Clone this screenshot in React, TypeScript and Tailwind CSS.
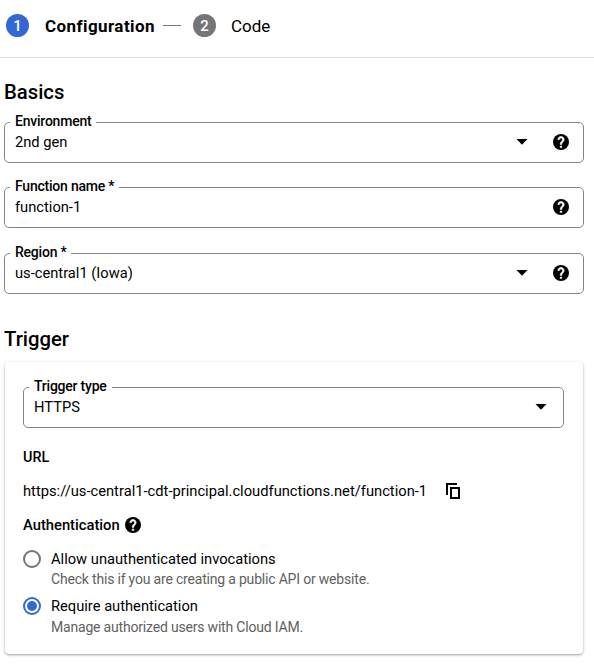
import type { ReactNode } from "react";

function HelpIcon({ className = "" }: { className?: string }) {
  return (
    <svg viewBox="2 2 20 20" className={`h-4 w-4 shrink-0 ${className}`}>
      <circle cx="12" cy="12" r="10" fill="#000" />
      <path
        fill="#fff"
        stroke="#fff"
        strokeWidth="0.7"
        d="M13 19h-2v-2h2v2zm2.07-7.75l-.9.92C13.45 12.9 13 13.5 13 15h-2v-.5c0-1.1.45-2.1 1.17-2.83l1.24-1.26c.37-.36.59-.86.59-1.41 0-1.1-.9-2-2-2s-2 .9-2 2H8c0-2.21 1.79-4 4-4s4 1.79 4 4c0 .88-.36 1.68-.93 2.25z"
      />
    </svg>
  );
}

function Arrow({ className = "" }: { className?: string }) {
  return (
    <svg viewBox="0 0 12 6" className={`h-1.5 w-3 shrink-0 ${className}`} fill="#000">
      <path d="M0.5 0h11L6 5.8z" />
    </svg>
  );
}

function Field({ label, value, arrow, help }: { label: string; value: string; arrow?: boolean; help?: boolean }) {
  return (
    <div className="relative flex h-[41px] items-center rounded-[5px] border border-[#80868b] pr-3.5 pb-px pl-2.5">
      <span className="absolute -top-[10px] left-[5px] bg-white px-[5px] text-[14px] leading-4 font-medium tracking-[-0.22px] whitespace-nowrap">
        {label}
      </span>
      <span className="mb-px flex-1 text-[14.7px] leading-5">{value}</span>
      {arrow && <Arrow className={help ? "" : "mr-0.5"} />}
      {help && <HelpIcon className="mb-px ml-[25px]" />}
    </div>
  );
}

function Step({ n, color, children }: { n: number; color: string; children: ReactNode }) {
  return (
    <div className="flex items-center">
      <span className={`flex h-[23px] w-[23px] items-center justify-center rounded-full pt-0.5 text-[15px] font-medium text-white ${color}`}>
        {n}
      </span>
      {children}
    </div>
  );
}

function Option({ checked, title, hint, gap }: { checked?: boolean; title: string; hint: string; gap: string }) {
  return (
    <div className="flex">
      <span
        className={`flex h-[18px] w-[18px] shrink-0 items-center justify-center rounded-full border-2 ${checked ? "border-[#3367d6]" : "border-[#757575]"}`}
      >
        {checked && <span className="h-2.5 w-2.5 rounded-full bg-[#3367d6]" />}
      </span>
      <div className="ml-2.5">
        <div className="text-[14.7px] leading-[18px]">{title}</div>
        <div className={`text-[14px] leading-[18px] tracking-[-0.19px] text-[#616161] ${gap}`}>{hint}</div>
      </div>
    </div>
  );
}

export default function App() {
  return (
    <div className="h-[672px] w-[594px] overflow-hidden bg-white font-['Roboto',sans-serif] text-black">
      <header className="flex h-[58px] items-center border-b border-[#dadce0] pb-[6px] pl-[6px]">
        <Step n={1} color="bg-[#3367d6]">
          <span className="ml-4 w-[110px] pt-0.5 text-[17px] font-bold tracking-[0.42px] whitespace-nowrap">Configuration</span>
        </Step>
        <div className="mr-3 ml-2 h-px w-[18px] bg-[#757575]" />
        <Step n={2} color="bg-[#757575]">
          <span className="ml-[15px] pt-0.5 text-[17px]">Code</span>
        </Step>
      </header>

      <main className="pr-2.5 pl-1">
        <h2 className="mt-[22px] text-[20.3px] leading-6 font-medium">Basics</h2>
        <div className="mt-[18px]">
          <Field label="Environment" value="2nd gen" arrow help />
        </div>
        <div className="mt-6">
          <Field label="Function name *" value="function-1" help />
        </div>
        <div className="mt-[25px]">
          <Field label="Region *" value="us-central1 (Iowa)" arrow help />
        </div>

        <h2 className="mt-[33px] text-[20.3px] leading-6 font-medium">Trigger</h2>
        <section className="mt-[11px] mr-px ml-px h-[292px] rounded-[4px] pt-[25px] pr-[19px] pl-[18px] shadow-[0_1px_2px_rgba(0,0,0,0.3),0_1px_4px_rgba(0,0,0,0.1)]">
          <Field label="Trigger type" value="HTTPS" arrow />
          <h3 className="mt-5 text-[14.4px] leading-5 font-medium">URL</h3>
          <div className="mt-[13px] flex items-center text-[14.72px] leading-5">
            <span className="w-[404px] whitespace-nowrap">https://us-central1-cdt-principal.cloudfunctions.net/function-1</span>
            <svg viewBox="0 0 14 16" className="ml-[19px] h-4 w-3.5" fill="none" stroke="#000" strokeWidth="2">
              <path d="M1 12V1h10" strokeWidth="2" />
              <path d="M5 5h8v10H5z" />
            </svg>
          </div>
          <div className="mt-[14px] flex items-center">
            <h3 className="text-[14.75px] leading-5 font-medium">Authentication</h3>
            <HelpIcon className="mb-px ml-[5px]" />
          </div>
          <div className="mt-[15px]">
            <Option title="Allow unauthenticated invocations" hint="Check this if you are creating a public API or website." gap="mt-[2px]" />
          </div>
          <div className="mt-[9px]">
            <Option checked title="Require authentication" hint="Manage authorized users with Cloud IAM." gap="mt-[3px]" />
          </div>
        </section>
      </main>
    </div>
  );
}
